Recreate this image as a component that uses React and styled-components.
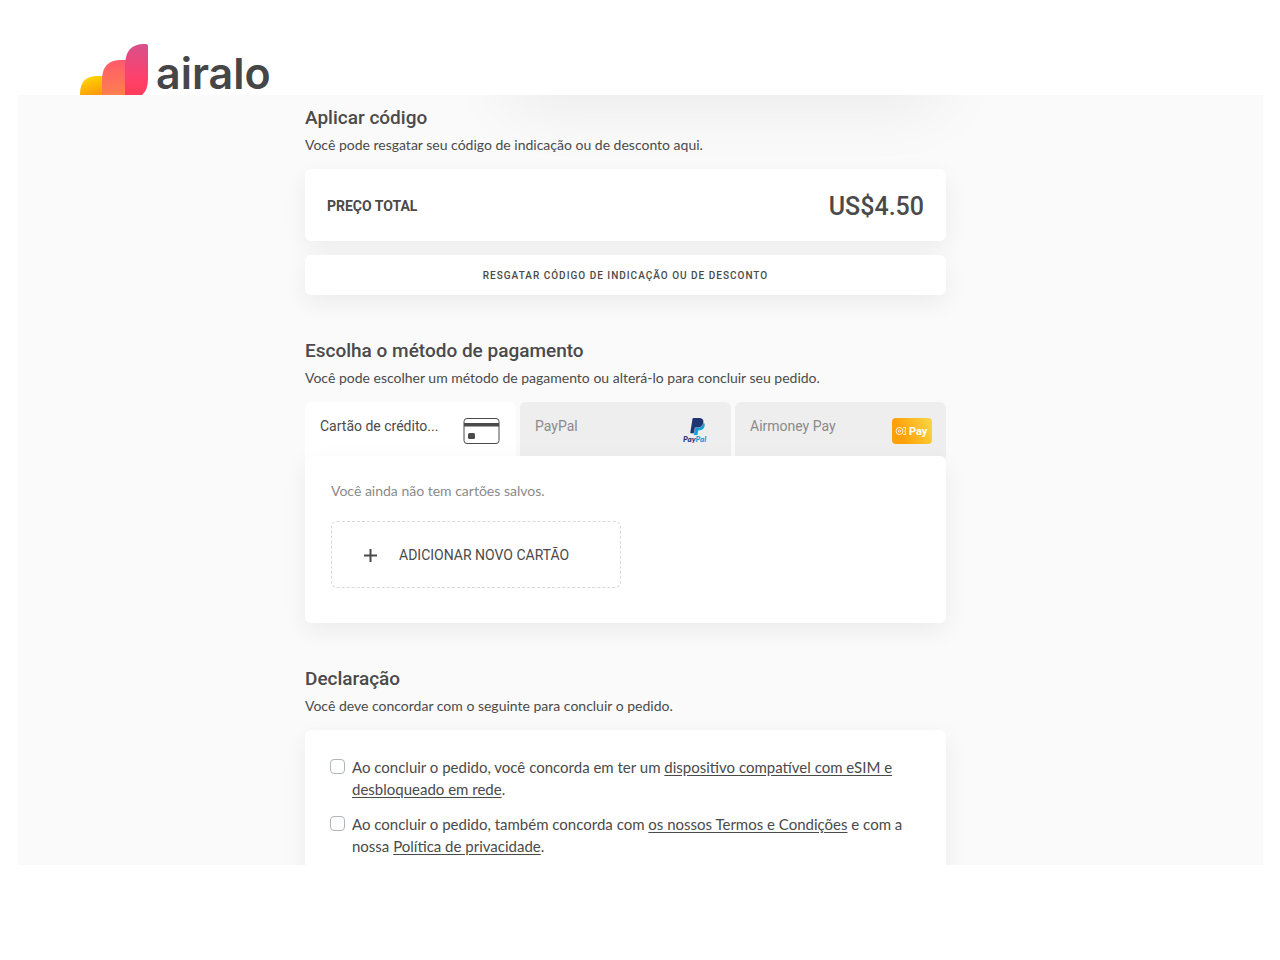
import React, { useState } from 'react';
import styled, { createGlobalStyle } from 'styled-components';

const GlobalStyle = createGlobalStyle`
  * {
    box-sizing: border-box;
  }

  body {
    margin: 0;
    background: #fff;
    color: #4a4a4a;
    font-family: Roboto, 'Liberation Sans', sans-serif;
    font-size: 14px;
    line-height: 20px;
  }

  button {
    font: inherit;
    color: inherit;
  }
`;

const Page = styled.div`
  display: grid;
  grid-template-rows: 95px minmax(0, 1fr) 95px;
  height: 100vh;
`;

const Header = styled.header`
  padding: 44px 80px 0;
`;

const LogoLink = styled.a`
  display: inline-flex;
  align-items: flex-start;
  gap: 7px;
  color: #464648;
  text-decoration: none;
`;

const LogoText = styled.span`
  font-family: Inter, sans-serif;
  font-size: 43px;
  font-weight: 600;
  line-height: 58px;
`;

const Main = styled.main`
  margin: 0 17px 0 18px;
  padding-right: 30px;
  background: #fafafa;
  overflow: hidden;
`;

const Column = styled.div`
  max-width: 641px;
  margin: 0 auto;
`;

const SummaryCard = styled.div`
  width: 430px;
  height: 80px;
  margin: -80px 6px 10px auto;
  border-radius: 6px;
  background: #fff;
  box-shadow: 0 8px 70px rgba(0, 0, 0, 0.07);
`;

const Section = styled.section`
  margin-bottom: 43px;
`;

const Title = styled.h2`
  margin: 0 0 4px;
  font-size: 19px;
  font-weight: 500;
  line-height: 26px;
`;

const Subtitle = styled.p`
  margin: 0 0 14px;
  font-family: Lato, sans-serif;
`;

const Card = styled.div`
  border-radius: 6px;
  background: #fff;
  box-shadow: 0 8px 24px rgba(0, 0, 0, 0.06);
`;

const TotalCard = styled(Card)`
  display: flex;
  align-items: center;
  justify-content: space-between;
  height: 72px;
  margin-bottom: 14px;
  padding: 2px 22px 0;
`;

const TotalLabel = styled.span`
  font-weight: 700;
  text-transform: uppercase;
`;

const TotalPrice = styled.span`
  padding-top: 2px;
  font-size: 25px;
  font-weight: 500;
  line-height: 32px;
`;

const RedeemButton = styled.button`
  display: block;
  width: 100%;
  height: 40px;
  padding: 2px 0 0;
  border: 0;
  border-radius: 6px;
  background: #fff;
  box-shadow: 0 8px 24px rgba(0, 0, 0, 0.06);
  font-size: 10px;
  font-weight: 500;
  letter-spacing: 1px;
  text-transform: uppercase;
  cursor: pointer;
`;

const Tabs = styled.div`
  display: grid;
  grid-template-columns: repeat(3, 1fr);
  gap: 4px;
  margin-bottom: -6px;
`;

const Tab = styled.button`
  display: flex;
  align-items: flex-start;
  justify-content: space-between;
  height: 60px;
  padding: 14px 14px 0 15px;
  border: 0;
  border-radius: 6px;
  background: ${(props) => (props.$active ? '#fff' : '#eee')};
  color: ${(props) => (props.$active ? '#4a4a4a' : '#8a8a8a')};
  cursor: pointer;

  svg {
    flex: none;
    margin-top: 2px;
  }
`;

const Panel = styled(Card)`
  position: relative;
  padding: 25px 26px 35px;
`;

const EmptyText = styled.p`
  margin: 0 0 20px;
  color: #8a8a8a;
  font-family: Lato, sans-serif;
`;

const AddCardButton = styled.button`
  display: flex;
  align-items: center;
  gap: 22px;
  width: 290px;
  height: 67px;
  padding: 0 31px;
  border: 1px dashed #d8d8d8;
  border-radius: 6px;
  background: #fff;
  text-transform: uppercase;
  cursor: pointer;
`;

const Terms = styled(Card)`
  display: grid;
  gap: 13px;
  padding: 26px 25px;
`;

const Term = styled.div`
  display: flex;
  align-items: flex-start;
  gap: 7px;
  font-family: Lato, sans-serif;
  font-size: 15px;
  line-height: 22px;
`;

const Checkbox = styled.input`
  appearance: none;
  flex: none;
  width: 15px;
  height: 15px;
  margin: 3px 0 0;
  border: 1px solid #adb5bd;
  border-radius: 4px;
  background: #fff;

  &:checked {
    background: #4a4a4a;
  }
`;

const TermLink = styled.a`
  color: inherit;
  text-decoration: underline;
  text-underline-offset: 2px;
`;

const LogoMark = () => (
  <svg width="69" height="51" viewBox="0 0 69 51" aria-hidden="true">
    <defs>
      <linearGradient id="logo-yellow" x1="0.3" y1="0" x2="0.6" y2="1">
        <stop offset="0" stopColor="#ffd800" />
        <stop offset="0.7" stopColor="#ff9a0a" />
      </linearGradient>
      <linearGradient id="logo-orange" x1="0" y1="0" x2="0" y2="1">
        <stop offset="0" stopColor="#ff5a6c" />
        <stop offset="1" stopColor="#ff8a48" />
      </linearGradient>
      <linearGradient id="logo-red" x1="0" y1="0" x2="0" y2="1">
        <stop offset="0" stopColor="#d94f8c" />
        <stop offset="0.6" stopColor="#ff4068" />
        <stop offset="1" stopColor="#ff3850" />
      </linearGradient>
    </defs>
    <path d="M0 60V50Q0 32 17 32H26V60Z" fill="url(#logo-yellow)" />
    <path d="M22 60V36Q22 16 41 16H50V60Z" fill="url(#logo-orange)" />
    <path d="M45 60V22Q45 0 64 0H66Q68 0 68 2V35Q68 46 62 51V60Z" fill="url(#logo-red)" />
  </svg>
);

const CreditCardIcon = () => (
  <svg width="40" height="26" viewBox="0 0 40 26" aria-hidden="true">
    <rect x="2" y="0.5" width="35" height="25" rx="3" fill="none" stroke="#4a4a4a" />
    <path d="M2 5H37V8.5H2Z" fill="#4a4a4a" />
    <rect x="6" y="15" width="7" height="6" rx="1.5" fill="#4a4a4a" />
  </svg>
);

const PayPalIcon = () => (
  <svg width="40" height="26" viewBox="0 0 40 26" aria-hidden="true">
    <g transform="translate(12 0) scale(0.71)">
      <path
        fill="#119fd8"
        d="M21.222 6.917a3.35 3.35 0 0 0-.607-.541c-.013.076-.026.175-.041.254-.93 4.778-4.005 7.201-9.138 7.201h-2.19a.563.563 0 0 0-.556.479l-1.187 7.527h-.506l-.24 1.516a.56.56 0 0 0 .554.647h3.882c.46 0 .85-.334.922-.788.06-.26.76-4.852.816-5.09a.932.932 0 0 1 .923-.788h.58c3.76 0 6.705-1.528 7.565-5.946.36-1.847.174-3.388-.777-4.471z"
      />
      <path
        fill="#1f3470"
        d="M7.076 21.337H2.47a.641.641 0 0 1-.633-.74L4.944.901C5.026.382 5.474 0 5.998 0h7.46c2.57 0 4.578.543 5.69 1.81 1.01 1.15 1.304 2.42 1.012 4.287-.023.143-.047.288-.077.437-.983 5.05-4.349 6.797-8.647 6.797h-2.19c-.524 0-.968.382-1.05.9l-1.12 7.106z"
      />
    </g>
    <text x="6" y="24" fontFamily="Lato, sans-serif" fontSize="8" fontWeight="900" fontStyle="italic" fill="#1f3470">
      Pay<tspan fill="#119fd8">Pal</tspan>
    </text>
  </svg>
);

const AirmoneyIcon = () => (
  <svg width="40" height="26" viewBox="0 0 40 26" aria-hidden="true">
    <defs>
      <linearGradient id="airmoney" x1="0" y1="0.3" x2="1" y2="0">
        <stop offset="0.1" stopColor="#ffa006" />
        <stop offset="1" stopColor="#f8d848" />
      </linearGradient>
    </defs>
    <rect width="40" height="26" rx="4" fill="url(#airmoney)" />
    <g fill="none" stroke="#fff" strokeOpacity="0.8">
      <circle cx="7.5" cy="13" r="3.5" />
      <circle cx="7.5" cy="13" r="1.2" />
      <path d="M11 9.5H13.5V12L12.5 13L13.5 14V16.5H11" />
    </g>
    <text x="17" y="17" fontFamily="Roboto, sans-serif" fontSize="11" fontWeight="700" fill="#fff">
      Pay
    </text>
  </svg>
);

const PlusIcon = () => (
  <svg width="14" height="14" viewBox="0 0 14 14" aria-hidden="true">
    <path d="M7.5 1V14M1 7.5H14" stroke="#4a4a4a" strokeWidth="2" />
  </svg>
);

const methods = [
  { id: 'card', label: 'Cartão de crédito...', Icon: CreditCardIcon },
  { id: 'paypal', label: 'PayPal', Icon: PayPalIcon },
  { id: 'airmoney', label: 'Airmoney Pay', Icon: AirmoneyIcon },
];

const PaymentMethods = () => {
  const [active, setActive] = useState('card');

  return (
    <>
      <Tabs role="tablist">
        {methods.map(({ id, label, Icon }) => (
          <Tab
            key={id}
            type="button"
            role="tab"
            aria-selected={active === id}
            $active={active === id}
            onClick={() => setActive(id)}
          >
            {label}
            <Icon />
          </Tab>
        ))}
      </Tabs>
      <Panel role="tabpanel">
        <EmptyText>Você ainda não tem cartões salvos.</EmptyText>
        <AddCardButton type="button">
          <PlusIcon />
          Adicionar novo cartão
        </AddCardButton>
      </Panel>
    </>
  );
};

const App = () => (
  <>
    <GlobalStyle />
    <Page>
      <Header>
        <LogoLink href="#">
          <LogoMark />
          <LogoText>airalo</LogoText>
        </LogoLink>
      </Header>
      <Main>
        <Column>
          <SummaryCard />
          <Section>
            <Title>Aplicar código</Title>
            <Subtitle>Você pode resgatar seu código de indicação ou de desconto aqui.</Subtitle>
            <TotalCard>
              <TotalLabel>Preço total</TotalLabel>
              <TotalPrice>US$4.50</TotalPrice>
            </TotalCard>
            <RedeemButton type="button">Resgatar código de indicação ou de desconto</RedeemButton>
          </Section>
          <Section>
            <Title>Escolha o método de pagamento</Title>
            <Subtitle>
              Você pode escolher um método de pagamento ou alterá-lo para concluir seu pedido.
            </Subtitle>
            <PaymentMethods />
          </Section>
          <Section>
            <Title>Declaração</Title>
            <Subtitle>Você deve concordar com o seguinte para concluir o pedido.</Subtitle>
            <Terms>
              <Term>
                <Checkbox type="checkbox" id="esim" />
                <label htmlFor="esim">
                  Ao concluir o pedido, você concorda em ter um{' '}
                  <TermLink href="#">dispositivo compatível com eSIM e desbloqueado em rede</TermLink>.
                </label>
              </Term>
              <Term>
                <Checkbox type="checkbox" id="terms" />
                <label htmlFor="terms">
                  Ao concluir o pedido, também concorda com{' '}
                  <TermLink href="#">os nossos Termos e Condições</TermLink> e com a nossa{' '}
                  <TermLink href="#">Política de privacidade</TermLink>.
                </label>
              </Term>
            </Terms>
          </Section>
        </Column>
      </Main>
    </Page>
  </>
);

export default App;
